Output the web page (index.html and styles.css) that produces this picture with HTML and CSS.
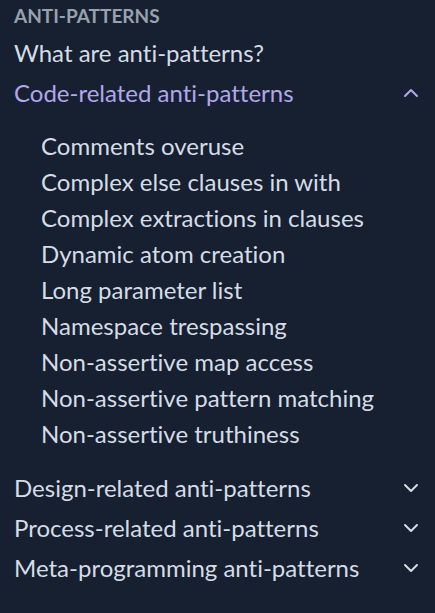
FILE: index.html
```html
<!DOCTYPE html>
<html lang="en">
<head>
    <meta charset="UTF-8">
    <meta name="viewport" content="width=device-width, initial-scale=1.0">
    <title>Anti-patterns</title>
    <link rel="stylesheet" href="styles.css">
</head>
<body>
    <nav class="sidebar">
        <h3 class="section-title">Anti-patterns</h3>
        <ul class="nav-list">
            <li><a class="nav-link" href="#">What are anti-patterns?</a></li>
            <li class="group open">
                <a class="nav-link group-toggle active" href="#">
                    <span>Code-related anti-patterns</span>
                    <svg class="chevron" viewBox="0 0 16 16" width="16" height="16"><path d="M2 11 L8 5 L14 11" /></svg>
                </a>
                <ul class="sub-list">
                    <li><a href="#">Comments overuse</a></li>
                    <li><a href="#">Complex else clauses in with</a></li>
                    <li><a href="#">Complex extractions in clauses</a></li>
                    <li><a href="#">Dynamic atom creation</a></li>
                    <li><a href="#">Long parameter list</a></li>
                    <li><a href="#">Namespace trespassing</a></li>
                    <li><a href="#">Non-assertive map access</a></li>
                    <li><a href="#">Non-assertive pattern matching</a></li>
                    <li><a href="#">Non-assertive truthiness</a></li>
                </ul>
            </li>
            <li class="group">
                <a class="nav-link group-toggle" href="#">
                    <span>Design-related anti-patterns</span>
                    <svg class="chevron" viewBox="0 0 16 16" width="16" height="16"><path d="M2 5 L8 11 L14 5" /></svg>
                </a>
            </li>
            <li class="group">
                <a class="nav-link group-toggle" href="#">
                    <span>Process-related anti-patterns</span>
                    <svg class="chevron" viewBox="0 0 16 16" width="16" height="16"><path d="M2 5 L8 11 L14 5" /></svg>
                </a>
            </li>
            <li class="group">
                <a class="nav-link group-toggle" href="#">
                    <span>Meta-programming anti-patterns</span>
                    <svg class="chevron" viewBox="0 0 16 16" width="16" height="16"><path d="M2 5 L8 11 L14 5" /></svg>
                </a>
            </li>
        </ul>
    </nav>
</body>
</html>
```

FILE: styles.css
```css
body {
    margin: 0;
    background: #162031;
    font-family: Lato, "Open Sans", sans-serif;
    font-variant-ligatures: none;
    color: #d5dce5;
}

.sidebar {
    padding: 4px 14px 0 14px;
}

.section-title {
    margin: 0 0 5px 0;
    font-size: 19px;
    font-weight: 700;
    line-height: 24px;
    text-transform: uppercase;
    color: #98a1ad;
}

.nav-list,
.sub-list {
    list-style: none;
    margin: 0;
    padding: 0;
}

.nav-link {
    display: flex;
    align-items: center;
    justify-content: space-between;
    font-size: 24px;
    line-height: 40px;
    color: #d5dce5;
    text-decoration: none;
}

.nav-link.active {
    color: #b3a6ea;
}

.chevron {
    fill: none;
    stroke: #d5dce5;
    stroke-width: 2;
    stroke-linecap: round;
    stroke-linejoin: round;
    margin-right: 2px;
}

.active .chevron {
    stroke: #b3a6ea;
}

.sub-list {
    padding: 15px 0 16px 27px;
}

.sub-list a {
    display: block;
    font-size: 24px;
    line-height: 36px;
    color: #d5dce5;
    text-decoration: none;
}
```
